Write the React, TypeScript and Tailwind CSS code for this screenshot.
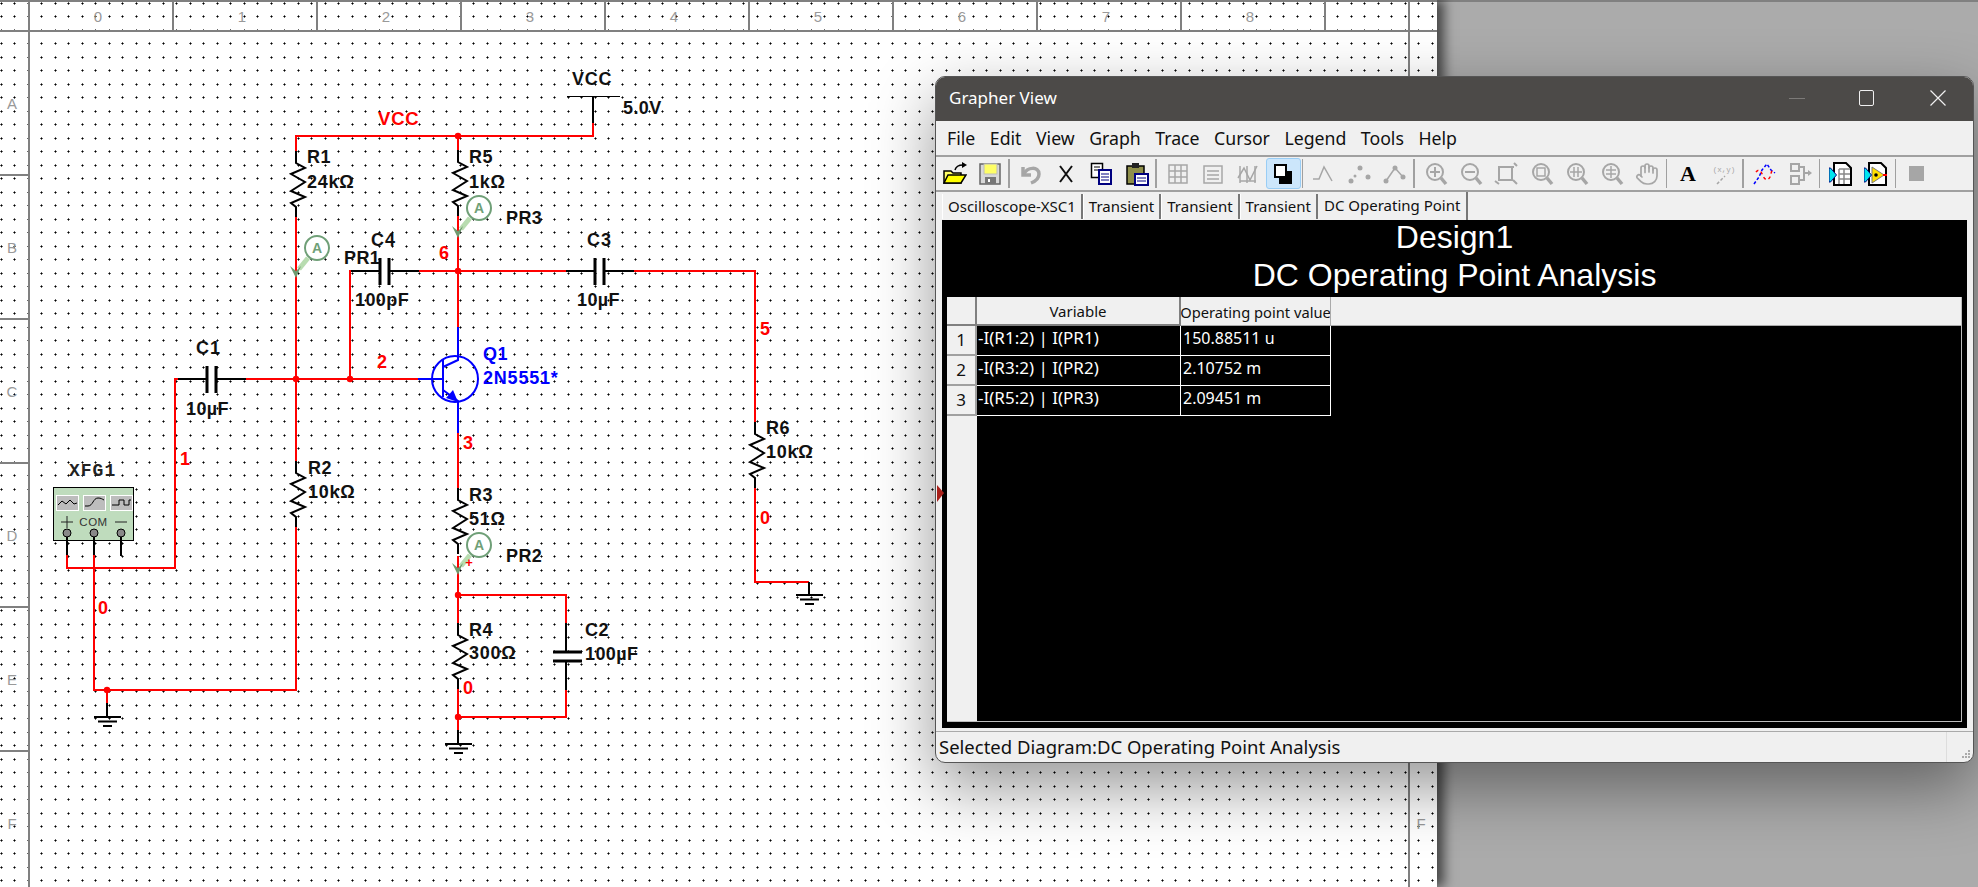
import { useMemo, type ReactNode } from 'react';
import { Hand } from 'lucide-react';

const RED = '#ff0000';
const BLUE = '#0000ff';
const GRAY = '#a6a6a6';

// net label / component text on the schematic
function T({ x, y, c = '#111', s = 18, w = 700, ls = 0.4, children }: { x: number; y: number; c?: string; s?: number; w?: number; ls?: number; children: ReactNode }) {
  return (
    <text x={x} y={y} fill={c} fontSize={s} fontWeight={w} letterSpacing={ls} dominantBaseline="central">
      {children}
    </text>
  );
}

function Wire({ d, c = RED }: { d: string; c?: string }) {
  return <path d={d} fill="none" stroke={c} strokeWidth={2} />;
}

function Dot({ x, y }: { x: number; y: number }) {
  return <circle cx={x} cy={y} r={3.2} fill={RED} />;
}

// vertical resistor, top lead starts at y
function Res({ x, y }: { x: number; y: number }) {
  return (
    <path
      d={`M${x} ${y}v12l9 5l-14 6l14 8l-14 9l14 6l-14 6l5 4v10`}
      fill="none"
      stroke="#000"
      strokeWidth={2}
    />
  );
}

function Cap({ cx, y }: { cx: number; y: number }) {
  return (
    <g stroke="#000" fill="none">
      <path d={`M${cx - 34} ${y}h29M${cx + 5} ${y}h29`} strokeWidth={2} />
      <path d={`M${cx - 5} ${y - 13}v27M${cx + 4} ${y - 13}v27`} strokeWidth={3} />
    </g>
  );
}

function Ground({ x, y }: { x: number; y: number }) {
  return <path d={`M${x - 13} ${y}h27M${x - 9} ${y + 4.5}h19M${x - 4} ${y + 9}h9`} stroke="#000" strokeWidth={2} fill="none" />;
}

// current probe, x/y is the arrow tip
function Probe({ x, y }: { x: number; y: number }) {
  return (
    <g>
      <path d={`M${x + 12} ${y - 20}L${x + 3} ${y - 9}`} stroke="#b8dcb0" strokeWidth={5} />
      <path d={`M${x - 6} ${y - 12}L${x} ${y - 7}L${x + 5} ${y - 12}L${x} ${y}z`} fill="#6f9a6f" />
      <circle cx={x + 21} cy={y - 30} r={12} fill="#fff" stroke="#6f9f77" strokeWidth={2} />
      <text x={x + 21} y={y - 30} fill="#6f9f77" fontSize={14} fontWeight={700} textAnchor="middle" dominantBaseline="central">
        A
      </text>
    </g>
  );
}

function Schematic() {
  // the sheet's grid of little plus marks, arms a bit lighter than the centre
  const [arms, centres] = useMemo(() => {
    let a = '';
    let c = '';
    for (let i = 0; i < 107; i++) {
      for (let j = 0; j < 66; j++) {
        const x = Math.round(0.6 + 13.5 * i);
        const y = Math.round(2.8 + 13.5 * j);
        a += `M${x} ${y - 1}h1v3h-1zM${x - 1} ${y}h3v1h-3z`;
        c += `M${x} ${y}h1v1h-1z`;
      }
    }
    return [a, c];
  }, []);

  const xTicks = [173, 317, 461, 605, 749, 893, 1037, 1181, 1325];
  const yTicks = [175, 319, 463, 607, 751];
  const letters = ['A', 'B', 'C', 'D', 'E', 'F'];

  return (
    <svg width={1437} height={887} className="absolute inset-0 font-['Liberation_Sans',sans-serif]">
      <path d={arms} fill="#666" shapeRendering="crispEdges" />
      <path d={centres} fill="#000" shapeRendering="crispEdges" />

      {/* sheet border */}
      <g stroke="#808080" strokeWidth={2} shapeRendering="crispEdges">
        <path d="M0 1H1437M0 31H1437M29 0V887M1409 0V887" />
        {xTicks.map((x) => (
          <path key={x} d={`M${x} 0V31`} />
        ))}
        {yTicks.map((y) => (
          <path key={y} d={`M0 ${y}H29M1409 ${y}H1437`} />
        ))}
      </g>
      <g fill="#999" fontSize={15}>
        {Array.from({ length: 9 }, (_, i) => (
          <text key={i} x={98 + 144 * i} y={16} textAnchor="middle" dominantBaseline="central">
            {i}
          </text>
        ))}
        {letters.map((l, i) => (
          <text key={l} x={12} y={103 + 144 * i} textAnchor="middle" dominantBaseline="central">
            {l}
          </text>
        ))}
        <text x={1421} y={823} textAnchor="middle" dominantBaseline="central">
          F
        </text>
      </g>

      {/* red nets */}
      <Wire d="M296 217V461M296 527V690H94V555M94 690M107 690V703" />
      <Wire d="M296 151V136H593V123M458 136V150M458 216V327" />
      <Wire d="M67 555V568H175V379H179M245 379H418M350 379V271H352M419 271H567M634 271H755V422M755 487V582H809" />
      <Wire d="M458 433V488M458 556V623M458 595H566V623M566 690V717H458M458 688V730" />
      <Dot x={458} y={136} />
      <Dot x={458} y={271} />
      <Dot x={350} y={379} />
      <Dot x={296} y={379} />
      <Dot x={107} y={690} />
      <Dot x={458} y={595} />
      <Dot x={458} y={717} />

      {/* parts */}
      <Res x={296} y={151} />
      <Res x={458} y={150} />
      <Res x={296} y={461} />
      <Res x={458} y={488} />
      <Res x={458} y={623} />
      <Res x={755} y={422} />
      <Cap cx={212} y={379} />
      <Cap cx={385} y={271} />
      <Cap cx={600} y={271} />
      <g stroke="#000" fill="none">
        <path d="M566 623V651M566 661V690" strokeWidth={2} />
        <path d="M553 652H582M553 661H582" strokeWidth={3} />
      </g>

      {/* VCC rail */}
      <path d="M593 123V97" stroke="#000" strokeWidth={2} />
      <path d="M567 96.5H620" stroke="#000" strokeWidth={1} />

      {/* grounds */}
      <path d="M107 703V717M458 730V744M809 582V595" stroke="#000" strokeWidth={2} />
      <Ground x={107} y={717} />
      <Ground x={458} y={744} />
      <Ground x={809} y={595} />

      {/* Q1 */}
      <g stroke={BLUE} fill="none" strokeWidth={2}>
        <circle cx={455} cy={379} r={23} />
        <path d="M418 379H443M443 360V397M443 367L458 360V327M443 390L458 401V433" />
      </g>
      <path d="M458 402L446 398L453 390z" fill={BLUE} />

      <Probe x={296} y={278} />
      <Probe x={458} y={238} />
      <Probe x={458} y={575} />
      <text x={469} y={562} fill={RED} fontSize={13} fontWeight={700} textAnchor="middle" dominantBaseline="central">
        +
      </text>

      {/* function generator */}
      <rect x={53.5} y={487.5} width={80} height={53} fill="#bfdcbd" stroke="#000" />
      <g fill="#bdbdbd" stroke="#fff">
        <rect x={56.5} y={495.5} width={22} height={15} />
        <rect x={83.5} y={495.5} width={22} height={15} />
        <rect x={110.5} y={495.5} width={22} height={15} />
      </g>
      <g fill="none" stroke="#000">
        <path d="M58 505l4-4l4 3l4-4l4 4l3-1" />
        <path d="M85 506h3c5 0 5-8 10-8c3 0 4 1 6 2" />
        <path d="M112 505h7v-5h5v5h5v-5h2" />
      </g>
      <path d="M61 522h12M67 516v12M115 522h12" stroke="#222" strokeWidth={1} />
      <text x={93.5} y={522} fill="#333" fontSize={11.5} letterSpacing={0.5} textAnchor="middle" dominantBaseline="central">
        COM
      </text>
      <path d="M67 533V555M94 533V555M121 533V556" stroke="#000" strokeWidth={2} />
      <g fill="#888" stroke="#000">
        <circle cx={67} cy={533} r={4} />
        <circle cx={94} cy={533} r={4} />
        <circle cx={121} cy={533} r={4} />
      </g>
      <text x={69} y={471} fill="#222" fontSize={18} fontWeight={700} letterSpacing={1} dominantBaseline="central" className="font-['Liberation_Mono',monospace]">
        XFG1
      </text>

      {/* labels */}
      <T x={378} y={118} c={RED} s={18.5} ls={0.8}>VCC</T>
      <T x={572} y={79} ls={0.8}>VCC</T>
      <T x={623} y={108}>5.0V</T>
      <T x={307} y={157}>R1</T>
      <T x={307} y={182} ls={0.7}>24kΩ</T>
      <T x={469} y={157}>R5</T>
      <T x={469} y={182} ls={0.7}>1kΩ</T>
      <T x={506} y={218}>PR3</T>
      <T x={371} y={240} ls={1}>C4</T>
      <T x={344} y={258}>PR1</T>
      <T x={355} y={300}>100pF</T>
      <T x={587} y={240} ls={1}>C3</T>
      <T x={577} y={300}>10µF</T>
      <T x={196} y={348} ls={1}>C1</T>
      <T x={186} y={409}>10µF</T>
      <T x={308} y={468}>R2</T>
      <T x={308} y={492} ls={0.7}>10kΩ</T>
      <T x={469} y={495}>R3</T>
      <T x={469} y={519} ls={0.7}>51Ω</T>
      <T x={506} y={556}>PR2</T>
      <T x={469} y={630}>R4</T>
      <T x={469} y={653} ls={0.7}>300Ω</T>
      <T x={585} y={630}>C2</T>
      <T x={585} y={654}>100µF</T>
      <T x={766} y={428}>R6</T>
      <T x={766} y={452} ls={0.7}>10kΩ</T>
      <T x={483} y={354} c={BLUE}>Q1</T>
      <T x={483} y={378} c={BLUE} ls={0.8}>2N5551*</T>
      <T x={439} y={253} c={RED}>6</T>
      <T x={377} y={362} c={RED}>2</T>
      <T x={463} y={443} c={RED}>3</T>
      <T x={180} y={459} c={RED}>1</T>
      <T x={98} y={608} c={RED}>0</T>
      <T x={760} y={329} c={RED}>5</T>
      <T x={760} y={518} c={RED}>0</T>
      <T x={463} y={688} c={RED}>0</T>
    </svg>
  );
}

function Icon({ children }: { children: ReactNode }) {
  return (
    <svg width={24} height={24} viewBox="0 0 24 24" fill="none">
      {children}
    </svg>
  );
}

function ZoomGlass({ children }: { children?: ReactNode }) {
  return (
    <Icon>
      <circle cx={11} cy={10} r={8} stroke={GRAY} strokeWidth={2} />
      <path d="M17 16l5 6" stroke={GRAY} strokeWidth={3.5} />
      {children}
    </Icon>
  );
}

const icons: Record<string, ReactNode> = {
  open: (
    <Icon>
      <path d="M1 9h7l2 2h8v10H1z" fill="#ffff66" stroke="#000" strokeWidth={1.5} />
      <path d="M1 21l4-8h18l-5 8z" fill="#ffff00" stroke="#000" strokeWidth={1.5} />
      <path d="M12 8c1-4 4-5 8-5" stroke="#000" strokeWidth={1.5} />
      <path d="M19 0l5 3-5 3z" fill="#000" />
    </Icon>
  ),
  save: (
    <Icon>
      <rect x={2} y={2} width={20} height={20} fill="#d8d8d8" stroke="#666" strokeWidth={1.5} />
      <rect x={6} y={2} width={13} height={10} fill="#ffff66" stroke="#bbb" />
      <rect x={7} y={15} width={11} height={7} fill="#777" />
      <rect x={10} y={17} width={2} height={3} fill="#fff" />
    </Icon>
  ),
  undo: (
    <Icon>
      <path d="M4 5v8h8" stroke={GRAY} strokeWidth={3.5} />
      <path d="M5 12c3-7 15-8 15 0c0 4-3 7-8 9" stroke={GRAY} strokeWidth={3.5} />
    </Icon>
  ),
  cut: (
    <Icon>
      <path d="M6 4l12 16M18 4L6 20" stroke="#111" strokeWidth={2} />
    </Icon>
  ),
  copy: (
    <Icon>
      <rect x={2.5} y={1.5} width={11} height={14} fill="#fff" stroke="#000" strokeWidth={1.5} />
      <path d="M5 5h6M5 8h4" stroke="#000" />
      <rect x={10} y={8} width={12} height={14} fill="#fff" stroke="#000080" strokeWidth={2} />
      <path d="M12 12h8M12 15h8M12 18h8" stroke="#000080" />
    </Icon>
  ),
  paste: (
    <Icon>
      <rect x={2} y={4} width={17} height={18} fill="#8f8f4a" stroke="#000" strokeWidth={1.5} />
      <rect x={7} y={1} width={7} height={5} fill="#222" />
      <rect x={10} y={12} width={13} height={11} fill="#fff" stroke="#000080" strokeWidth={2} />
      <path d="M12 16h9M12 19h9" stroke="#000080" />
    </Icon>
  ),
  grid: (
    <Icon>
      <path d="M3 3h18v18H3zM9 3v18M15 3v18M3 9h18M3 15h18" stroke={GRAY} strokeWidth={1.5} />
    </Icon>
  ),
  list: (
    <Icon>
      <path d="M3 4h18v17H3zM6 9h12M6 13h12M6 17h12" stroke={GRAY} strokeWidth={1.5} />
    </Icon>
  ),
  chart: (
    <Icon>
      <path d="M4 4v17M11 4v17M19 4v17M4 19h16" stroke={GRAY} strokeWidth={1.5} />
      <path d="M2 16l6-10l6 12l7-14" stroke={GRAY} strokeWidth={1.5} />
    </Icon>
  ),
  active: (
    <Icon>
      <rect x={8} y={9} width={13} height={13} fill="#000" />
      <rect x={4} y={3} width={11} height={12} fill="#fff" stroke="#000" strokeWidth={2} />
    </Icon>
  ),
  peak: (
    <Icon>
      <path d="M1 17h6l5-12l8 14" stroke={GRAY} strokeWidth={1.5} />
    </Icon>
  ),
  points: (
    <Icon>
      <g fill={GRAY}>
        <circle cx={3} cy={19} r={2.5} />
        <circle cx={12} cy={6} r={2.5} />
        <circle cx={20} cy={15} r={2.5} />
        <circle cx={7} cy={14} r={1.5} />
      </g>
    </Icon>
  ),
  pointsLine: (
    <Icon>
      <path d="M3 19l9-13l8 9" stroke={GRAY} strokeWidth={1.5} />
      <g fill={GRAY}>
        <circle cx={3} cy={19} r={2.5} />
        <circle cx={12} cy={6} r={2.5} />
        <circle cx={20} cy={15} r={2.5} />
      </g>
    </Icon>
  ),
  zoomIn: (
    <ZoomGlass>
      <path d="M6 10h10M11 5v10" stroke={GRAY} strokeWidth={2} />
    </ZoomGlass>
  ),
  zoomOut: (
    <ZoomGlass>
      <path d="M6 10h10" stroke={GRAY} strokeWidth={2} />
    </ZoomGlass>
  ),
  zoomFit: (
    <Icon>
      <path d="M4 5h16M5 5v13h13V5M1 19l4 3M20 1l3 3M19 18l4 4" stroke={GRAY} strokeWidth={2} />
    </Icon>
  ),
  zoomBox: (
    <ZoomGlass>
      <rect x={7} y={6} width={8} height={8} stroke={GRAY} strokeWidth={1.5} />
    </ZoomGlass>
  ),
  zoomX: (
    <ZoomGlass>
      <path d="M9 5v10M13 5v10M5 10h12" stroke={GRAY} strokeWidth={1.5} />
    </ZoomGlass>
  ),
  zoomY: (
    <ZoomGlass>
      <path d="M6 8h10M6 12h10M11 4v12" stroke={GRAY} strokeWidth={1.5} />
    </ZoomGlass>
  ),
  hand: <Hand size={24} color={GRAY} strokeWidth={1.7} />,
  font: (
    <Icon>
      <text x={12} y={19} fontSize={22} fontWeight={700} textAnchor="middle" fill="#000" fontFamily="'Liberation Serif', serif">
        A
      </text>
    </Icon>
  ),
  xy: (
    <Icon>
      <text x={12} y={10} fontSize={7.5} textAnchor="middle" fill={GRAY} fontFamily="'Liberation Mono', monospace">
        (x,y)
      </text>
      <path d="M5 22l8-8" stroke={GRAY} strokeWidth={1.5} strokeDasharray="3 2" />
    </Icon>
  ),
  trace: (
    <Icon>
      <path d="M1 22l5-7l3-7l5-6l4 6l4 3" stroke="#0000ff" strokeWidth={1.5} strokeDasharray="3 2" />
      <path d="M3 10c3-4 5-1 7 4c2 4 5 5 7 1l2-7" stroke="#ff0000" strokeWidth={1.5} strokeDasharray="3 3" />
    </Icon>
  ),
  block: (
    <Icon>
      <path d="M3 2h8v7H3zM3 14h8v8H3zM11 5h5v13h-5M16 11h4" stroke={GRAY} strokeWidth={2} />
      <path d="M20 8l4 3-4 3z" fill={GRAY} />
    </Icon>
  ),
  sheet: (
    <Icon>
      <path d="M5 1h12l5 5v17H5z" fill="#fff" stroke="#000" strokeWidth={2} />
      <path d="M10 7h11M10 12h11M10 17h11M10 7v15M15 7v15" stroke="#888" strokeWidth={1.5} />
      <path d="M0 6v14h1.500l6-7l-6-7z" fill="#00e5ee" stroke="#000080" />
    </Icon>
  ),
  waveSheet: (
    <Icon>
      <path d="M5 1h12l5 5v17H5z" fill="#fff" stroke="#000" strokeWidth={2} />
      <path d="M8 5l12 8l-12 8z" fill="#ffe000" stroke="#777" />
      <circle cx={12} cy={13} r={1.800} fill="#000" />
      <path d="M19 13h4" stroke="#ff0000" strokeWidth={2} />
      <path d="M0 6v14h1.500l6-7l-6-7z" fill="#00e5ee" stroke="#000080" />
    </Icon>
  ),
  stop: (
    <Icon>
      <rect x={4} y={4} width={15} height={15} fill={GRAY} />
    </Icon>
  ),
};

const toolGroups = [
  ['open', 'save'],
  ['undo', 'cut', 'copy', 'paste'],
  ['grid', 'list', 'chart', 'active'],
  ['peak', 'points', 'pointsLine'],
  ['zoomIn', 'zoomOut', 'zoomFit', 'zoomBox', 'zoomX', 'zoomY', 'hand'],
  ['font', 'xy'],
  ['trace', 'block'],
  ['sheet', 'waveSheet'],
  ['stop'],
];

const menus = ['File', 'Edit', 'View', 'Graph', 'Trace', 'Cursor', 'Legend', 'Tools', 'Help'];

const rows = [
  ['-I(R1:2) | I(PR1)', '150.88511 u'],
  ['-I(R3:2) | I(PR2)', '2.10752 m'],
  ['-I(R5:2) | I(PR3)', '2.09451 m'],
];

function GrapherWindow() {
  return (
    <div className="absolute left-[935px] top-[76px] z-20 flex h-[687px] w-[1039px] flex-col rounded-[10px] border border-[#555] bg-[#f0f0f0] font-['Noto_Sans',sans-serif] text-[#111] shadow-[0_24px_64px_rgba(0,0,0,0.42)]">
      {/* title bar */}
      <div className="flex h-[44px] shrink-0 items-center justify-between rounded-t-[9px] bg-[#4c4a48] pl-[13px] pb-[2px] text-[17px] text-white">
        <span>Grapher View</span>
        <div className="flex items-center">
          <div className="mr-[54px] h-px w-4 bg-[#7c7a78]" />
          <div className="mr-[56px] h-4 w-[15px] rounded-[2px] border border-[#f0f0f0]" />
          <svg width={16} height={16} className="mr-[27px]" viewBox="0 0 16 16">
            <path d="M0.500 0.500L15.500 15.500M15.500 0.500L0.500 15.500" stroke="#f0f0f0" strokeWidth={1.2} />
          </svg>
        </div>
      </div>

      {/* menu */}
      <div className="flex h-[36px] shrink-0 items-center gap-[14.500px] border-b-2 border-[#a0a0a0] pl-[11px] text-[17.700px]">
        {menus.map((m) => (
          <span key={m}>{m}</span>
        ))}
      </div>

      {/* toolbar */}
      <div className="flex h-[35px] shrink-0 items-center border-b-2 border-[#a0a0a0] pl-px">
        {toolGroups.map((group, i) => (
          <div key={i} className="flex h-full items-center">
            {i > 0 && <div className="ml-[1px] mr-[3.500px] h-[29px] w-[1.500px] bg-[#a0a0a0]" />}
            {group.map((name) => (
              <div
                key={name}
                className={
                  name === 'active'
                    ? 'flex h-[31px] w-[35.200px] items-center justify-center rounded-[3px] border border-[#99cdf5] bg-[#cce6fb]'
                    : 'flex h-[31px] w-[35.200px] items-center justify-center'
                }
              >
                {icons[name]}
              </div>
            ))}
          </div>
        ))}
      </div>

      {/* tabs */}
      <div className="flex h-[28px] shrink-0 items-stretch pl-[6px] text-[15px]">
        {['Oscilloscope-XSC1', 'Transient', 'Transient', 'Transient'].map((t, i) => (
          <div key={i} className="mt-[2px] mb-[1px] flex items-center border-l border-r-2 border-l-white border-r-[#777] px-[5px] leading-none whitespace-nowrap">
            {t}
          </div>
        ))}
        <div className="flex items-center border-r-2 border-[#777] pl-[6px] pr-[6px] pb-[1px] whitespace-nowrap">DC Operating Point</div>
      </div>

      {/* diagram */}
      <div className="relative mx-[6px] flex min-h-0 flex-1 flex-col bg-black pb-[6px] pl-[5px] pr-[5px]">
        <div className="flex h-[77px] shrink-0 flex-col items-center justify-center pb-[5px] font-['Liberation_Sans',sans-serif] text-[32px] leading-[38px] text-white">
          <div>Design1</div>
          <div>DC Operating Point Analysis</div>
        </div>
        <div className="flex flex-1 flex-col border-r border-b border-[#bdbdbd] text-[15px]">
          <div className="flex h-[29px] bg-[#f0f0f0]">
            <div className="w-[30px] border-r-2 border-b-2 border-[#808080]" />
            <div className="flex w-[204px] items-center justify-center border-r-2 border-b-2 border-[#808080] pt-[2px]">Variable</div>
            <div className="flex w-[150px] items-center justify-center overflow-hidden border-r border-b border-[#aaa] pt-[2px] text-[14.700px] whitespace-nowrap">Operating point value</div>
            <div className="flex-1 border-b border-[#aaa]" />
          </div>
          <div className="flex flex-1">
            <div className="w-[30px] bg-[#f0f0f0]">
              {rows.map((_, i) => (
                <div key={i} className="flex h-[30px] items-center justify-center border-r-2 border-b-2 border-[#a0a0a0] text-[17px]">
                  {i + 1}
                </div>
              ))}
            </div>
            <div className="text-white">
              {rows.map(([a, b]) => (
                <div key={a} className="flex h-[30px]">
                  <div className="w-[204px] border-r border-b border-white pl-px text-[17px] leading-[24px]">{a}</div>
                  <div className="w-[150px] border-r border-b border-white pl-[2px] text-[16px] leading-[24px]">{b}</div>
                </div>
              ))}
            </div>
          </div>
        </div>
      </div>

      {/* status bar */}
      <div className="mt-[3px] flex h-[31px] shrink-0 items-center justify-between border-t border-[#aaa] pl-[3px] text-[18.500px]">
        <span>Selected Diagram:DC Operating Point Analysis</span>
        <div className="flex h-full w-[27px] items-end justify-end border-l border-[#ddd] pb-[3px] pr-[2px]">
          <svg width={9} height={9} viewBox="0 0 9 9" fill="#aaa">
            <path d="M6 0h2v2H6zM3 3h2v2H3zM6 3h2v2H6zM0 6h2v2H0zM3 6h2v2H3zM6 6h2v2H6z" />
          </svg>
        </div>
      </div>

      <svg width={8} height={17} className="absolute left-0 top-[408px]" viewBox="0 0 8 17">
        <path d="M1 0L8 8L1 17z" fill="#a8201a" />
      </svg>
    </div>
  );
}

export default function App() {
  return (
    <div className="relative flex h-[887px] w-[1978px] overflow-hidden bg-[#ababab]">
      <div className="relative z-10 h-[887px] w-[1437px] bg-white shadow-[7px_0_11px_rgba(0,0,0,0.6)]">
        <Schematic />
      </div>
      <div className="h-[2px] flex-1 bg-[#808080]" />
      <GrapherWindow />
    </div>
  );
}
